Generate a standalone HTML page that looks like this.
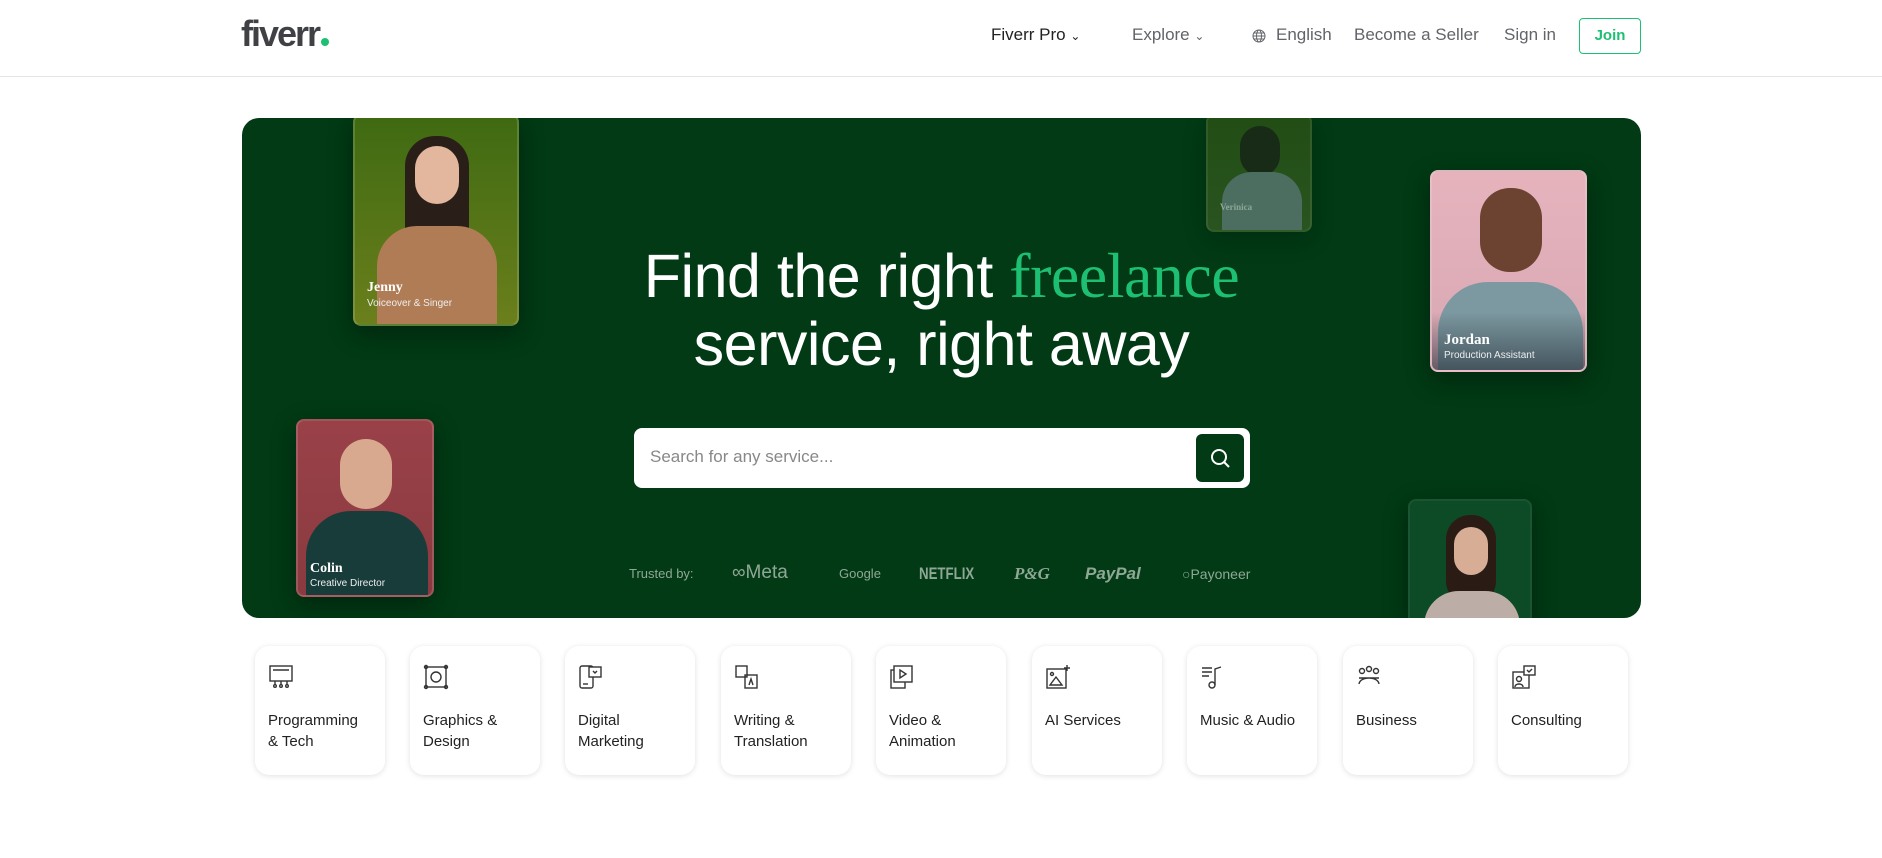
<!DOCTYPE html>
<html><head><meta charset="utf-8"><style>
*{margin:0;padding:0;box-sizing:border-box}
body{width:1882px;height:858px;background:#fff;font-family:"Liberation Sans",sans-serif;position:relative;overflow:hidden;color:#222}
.hdr{position:absolute;left:0;top:0;width:1882px;height:77px;border-bottom:1px solid #e4e5e7}
.logo{position:absolute;left:241px;top:13px;font-size:36px;font-weight:bold;color:#404145;letter-spacing:-2px}
.logo i{display:inline-block;width:8px;height:8px;border-radius:50%;background:#1dbf73;margin-left:2px}
.nav{position:absolute;top:25px;font-size:17px;color:#62646a}
.join{position:absolute;left:1579px;top:18px;width:62px;height:36px;border:1px solid #1dbf73;border-radius:4px;color:#1dbf73;font-size:15px;font-weight:bold;text-align:center;line-height:34px}
.hero{position:absolute;left:242px;top:118px;width:1399px;height:500px;background:#013a14;border-radius:17px;overflow:hidden}
.ph{position:absolute;border-radius:8px;overflow:hidden;box-shadow:0 8px 24px rgba(0,0,0,.35);border:2px solid rgba(255,255,255,.15)}
.ph .nm{position:absolute;left:12px;font-family:"Liberation Serif",serif;font-weight:bold;color:#fff;font-size:14px}
.ph .rl{position:absolute;left:12px;color:#eee;font-size:10px}
h1{position:absolute;left:0;width:1399px;top:124px;text-align:center;color:#fff;font-weight:normal;font-size:61px;line-height:68px;letter-spacing:-.5px}
h1 span{font-family:"Liberation Serif",serif;color:#1dbf73;font-size:64px}
.search{position:absolute;left:392px;top:310px;width:616px;height:60px;background:#fff;border-radius:8px}
.search .t{position:absolute;left:16px;top:19px;font-size:17px;color:#888}
.search .b{position:absolute;right:6px;top:6px;width:48px;height:48px;background:#013a14;border-radius:6px}
.tr{position:absolute;top:448px;color:#8fa895;font-size:14px;white-space:nowrap}
.card{position:absolute;top:646px;width:130px;height:129px;border-radius:14px;background:#fff;box-shadow:0 1px 6px rgba(0,0,0,.12)}
.card svg{position:absolute;left:13px;top:18px}
.card p{position:absolute;left:13px;top:64px;font-size:15px;line-height:21px;color:#222}
</style></head><body>
<div class="hdr">
<div class="logo">fiverr<i></i></div>
<div class="nav" style="left:991px;color:#222">Fiverr Pro <span style="font-size:12px">&#8964;</span></div>
<div class="nav" style="left:1132px">Explore <span style="font-size:12px">&#8964;</span></div>
<svg style="position:absolute;left:1252px;top:29px" width="14" height="14" viewBox="0 0 14 14" fill="none" stroke="#62646a"><circle cx="7" cy="7" r="6"/><ellipse cx="7" cy="7" rx="2.5" ry="6"/><path d="M1 7h12M2 4h10M2 10h10"/></svg>
<div class="nav" style="left:1276px">English</div>
<div class="nav" style="left:1354px">Become a Seller</div>
<div class="nav" style="left:1504px">Sign in</div>
<div class="join">Join</div>
</div>
<div class="hero">
<div class="ph" style="left:111px;top:-4px;width:166px;height:212px;background:linear-gradient(#3f6a12,#6b7f1c)">
<div style="position:absolute;left:50px;top:20px;width:64px;height:150px;border-radius:30px;background:#2a1f18"></div>
<div style="position:absolute;left:60px;top:30px;width:44px;height:58px;border-radius:22px;background:#e2b79d"></div>
<div style="position:absolute;left:22px;top:110px;width:120px;height:110px;border-radius:40px 40px 0 0;background:#b07c55"></div>
<div class="nm" style="top:164px">Jenny</div><div class="rl" style="top:182px">Voiceover &amp; Singer</div></div>
<div class="ph" style="left:964px;top:-4px;width:106px;height:118px;background:linear-gradient(#3d5e16,#4b6a2a);opacity:.55">
<div style="position:absolute;left:32px;top:10px;width:40px;height:50px;border-radius:20px;background:#2a2018"></div>
<div style="position:absolute;left:14px;top:56px;width:80px;height:70px;border-radius:30px 30px 0 0;background:#8a9aa0"></div>
<div class="nm" style="top:86px;font-size:9px">Verinica</div></div>
<div class="ph" style="left:1188px;top:52px;width:157px;height:202px;background:linear-gradient(#e6b3bd,#d7a8b3)">
<div style="position:absolute;left:48px;top:16px;width:62px;height:84px;border-radius:30px;background:#6b4330"></div>
<div style="position:absolute;left:6px;top:110px;width:145px;height:100px;border-radius:50px 50px 0 0;background:#7c98a0"></div>
<div style="position:absolute;left:0;top:140px;width:157px;height:62px;background:linear-gradient(transparent,rgba(40,50,60,.7))"></div>
<div class="nm" style="top:160px;font-size:15px">Jordan</div><div class="rl" style="top:178px">Production Assistant</div></div>
<div class="ph" style="left:54px;top:301px;width:138px;height:178px;background:linear-gradient(#9a4148,#8a3a40)">
<div style="position:absolute;left:42px;top:18px;width:52px;height:70px;border-radius:26px;background:#d8a88f"></div>
<div style="position:absolute;left:8px;top:90px;width:122px;height:95px;border-radius:45px 45px 0 0;background:#183c3a"></div>
<div class="nm" style="top:140px">Colin</div><div class="rl" style="top:157px">Creative Director</div></div>
<div class="ph" style="left:1166px;top:381px;width:124px;height:130px;background:#0d4a26;border-color:rgba(255,255,255,.06)">
<div style="position:absolute;left:36px;top:14px;width:50px;height:90px;border-radius:24px;background:#2a1c15"></div>
<div style="position:absolute;left:44px;top:26px;width:34px;height:48px;border-radius:17px;background:#d7ad96"></div>
<div style="position:absolute;left:14px;top:90px;width:96px;height:50px;border-radius:35px 35px 0 0;background:#bcaea6"></div></div>
<h1>Find the right <span>freelance</span><br>service, right away</h1>
<div class="search"><div class="t">Search for any service...</div><div class="b">
<svg width="48" height="48" viewBox="0 0 48 48" fill="none" stroke="#fff" stroke-width="2"><circle cx="23" cy="23" r="7"/><path d="M28 28l5 5"/></svg></div></div>
<div class="tr" style="left:387px;font-size:13px">Trusted by:</div>
<div class="tr" style="left:490px;font-size:19px;top:444px">&#8734;Meta</div>
<div class="tr" style="left:597px;font-size:13px">Google</div>
<div class="tr" style="left:677px;font-size:17px;font-weight:bold;top:446px;transform:scaleX(.78);transform-origin:left">NETFLIX</div>
<div class="tr" style="left:772px;font-size:17px;font-style:italic;font-family:'Liberation Serif',serif;font-weight:bold;top:446px">P&amp;G</div>
<div class="tr" style="left:843px;font-size:17px;font-style:italic;font-weight:bold;top:446px">PayPal</div>
<div class="tr" style="left:940px;font-size:14px">&#9675;Payoneer</div>
</div>
<div class="card" style="left:255px"><svg width="26" height="26" viewBox="0 0 26 26" fill="none" stroke="#333" stroke-width="1.4"><rect x="2" y="2" width="22" height="15"/><path d="M5 6h16M13 17v4M7 17v4M19 17v4"/><circle cx="7" cy="22" r="1.3"/><circle cx="13" cy="22" r="1.3"/><circle cx="19" cy="22" r="1.3"/></svg><p>Programming<br>&amp; Tech</p></div>
<div class="card" style="left:410px"><svg width="26" height="26" viewBox="0 0 26 26" fill="none" stroke="#333" stroke-width="1.4"><rect x="3" y="3" width="20" height="20"/><circle cx="3" cy="3" r="1.5"/><circle cx="23" cy="3" r="1.5"/><circle cx="3" cy="23" r="1.5"/><circle cx="23" cy="23" r="1.5"/><circle cx="13" cy="13" r="5"/></svg><p>Graphics &amp;<br>Design</p></div>
<div class="card" style="left:565px"><svg width="26" height="26" viewBox="0 0 26 26" fill="none" stroke="#333" stroke-width="1.4"><rect x="2" y="2" width="13" height="22" rx="2"/><path d="M5 20h5"/><rect x="11" y="3" width="12" height="10" fill="#fff"/><path d="M15 7l2 2 2-2"/></svg><p>Digital<br>Marketing</p></div>
<div class="card" style="left:721px"><svg width="26" height="26" viewBox="0 0 26 26" fill="none" stroke="#333" stroke-width="1.4"><rect x="2" y="2" width="11" height="11"/><rect x="11" y="11" width="12" height="13"/><path d="M15 21l2-6 2 6"/></svg><p>Writing &amp;<br>Translation</p></div>
<div class="card" style="left:876px"><svg width="26" height="26" viewBox="0 0 26 26" fill="none" stroke="#333" stroke-width="1.4"><rect x="2" y="6" width="14" height="18"/><rect x="5" y="2" width="18" height="16" fill="#fff"/><path d="M11 6v8l6-4z"/></svg><p>Video &amp;<br>Animation</p></div>
<div class="card" style="left:1032px"><svg width="26" height="26" viewBox="0 0 26 26" fill="none" stroke="#333" stroke-width="1.4"><rect x="2" y="5" width="19" height="19"/><circle cx="7" cy="10" r="1.5"/><path d="M5 21l6-8 6 8z"/><path d="M22 1v6M19 4h6"/></svg><p>AI Services</p></div>
<div class="card" style="left:1187px"><svg width="26" height="26" viewBox="0 0 26 26" fill="none" stroke="#333" stroke-width="1.4"><path d="M2 4h10M2 8h10M2 12h7"/><path d="M15 21V5l6-2"/><circle cx="12" cy="21" r="3"/></svg><p>Music &amp; Audio</p></div>
<div class="card" style="left:1343px"><svg width="26" height="26" viewBox="0 0 26 26" fill="none" stroke="#333" stroke-width="1.4"><circle cx="6" cy="7" r="2.5"/><circle cx="13" cy="5" r="2.5"/><circle cx="20" cy="7" r="2.5"/><path d="M3 20c1-8 19-8 20 0M3 14h20"/></svg><p>Business</p></div>
<div class="card" style="left:1498px"><svg width="26" height="26" viewBox="0 0 26 26" fill="none" stroke="#333" stroke-width="1.4"><rect x="2" y="8" width="16" height="16"/><circle cx="8" cy="15" r="2.5"/><path d="M4 23c0-4 8-4 8 0"/><rect x="13" y="2" width="11" height="9" fill="#fff"/><path d="M16 6l2 2 3-3"/></svg><p>Consulting</p></div>
</body></html>
